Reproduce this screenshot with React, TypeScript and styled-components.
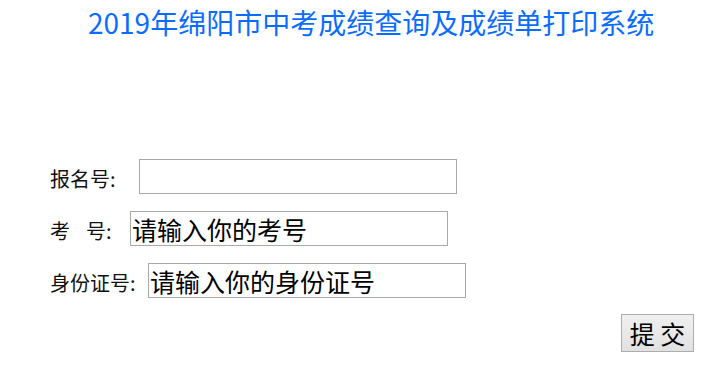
import React from "react";
import styled, { createGlobalStyle } from "styled-components";

const Global = createGlobalStyle`
  html, body { margin: 0; padding: 0; background: #ffffff; }
  body { font-family: "Noto Sans CJK SC", "Noto Sans", sans-serif; color: #000; }
`;

const Page = styled.div`
  width: 725px;
  height: 368px;
  overflow: hidden;
`;

const Title = styled.h1`
  margin: 0;
  padding: 5px 0 0 88px;
  height: 40px;
  font-size: 28px;
  line-height: 34px;
  font-weight: normal;
  color: #0a6cff;
  white-space: nowrap;
`;

const Form = styled.form`
  margin: 114px 0 0 0;
  padding-left: 50px;
  display: flex;
  flex-direction: column;
`;

const Row = styled.div`
  display: flex;
  align-items: center;
  height: 35px;
  margin-bottom: 17px;
`;

const Label = styled.label<{ $width: number }>`
  flex: 0 0 auto;
  width: ${(p) => p.$width}px;
  font-size: 20px;
  line-height: 24px;
  padding-top: 4px;
  white-space: nowrap;
  color: #111;
`;

const Spacer = styled.span`
  display: inline-block;
  width: 16px;
`;

const Input = styled.input`
  box-sizing: border-box;
  width: 318px;
  height: 35px;
  border: 1px solid #a9a9a9;
  padding: 0 1px;
  margin: 0;
  font-family: "Noto Sans CJK SC", sans-serif;
  font-size: 25px;
  color: #000;
  background: #fff;
  outline: none;
`;

const ButtonRow = styled.div`
  display: flex;
  justify-content: flex-end;
  padding-right: 31px;
  margin-top: -1px;
`;

const Submit = styled.button`
  box-sizing: border-box;
  width: 73px;
  height: 38px;
  border: 1px solid #adadad;
  border-radius: 0;
  background: linear-gradient(#f0f0f0, #e1e1e1);
  font-family: "Noto Sans CJK SC", sans-serif;
  font-size: 25px;
  line-height: 34px;
  padding: 0;
  color: #000;
`;

export default function App() {
  return (
    <Page>
      <Global />
      <Title>2019年绵阳市中考成绩查询及成绩单打印系统</Title>
      <Form onSubmit={(e) => e.preventDefault()}>
        <Row>
          <Label $width={89}>报名号:</Label>
          <Input defaultValue="" />
        </Row>
        <Row>
          <Label $width={80}>
            考<Spacer />号:
          </Label>
          <Input defaultValue="请输入你的考号" />
        </Row>
        <Row>
          <Label $width={98}>身份证号:</Label>
          <Input defaultValue="请输入你的身份证号" />
        </Row>
      </Form>
      <ButtonRow>
        <Submit type="submit">提 交</Submit>
      </ButtonRow>
    </Page>
  );
}
